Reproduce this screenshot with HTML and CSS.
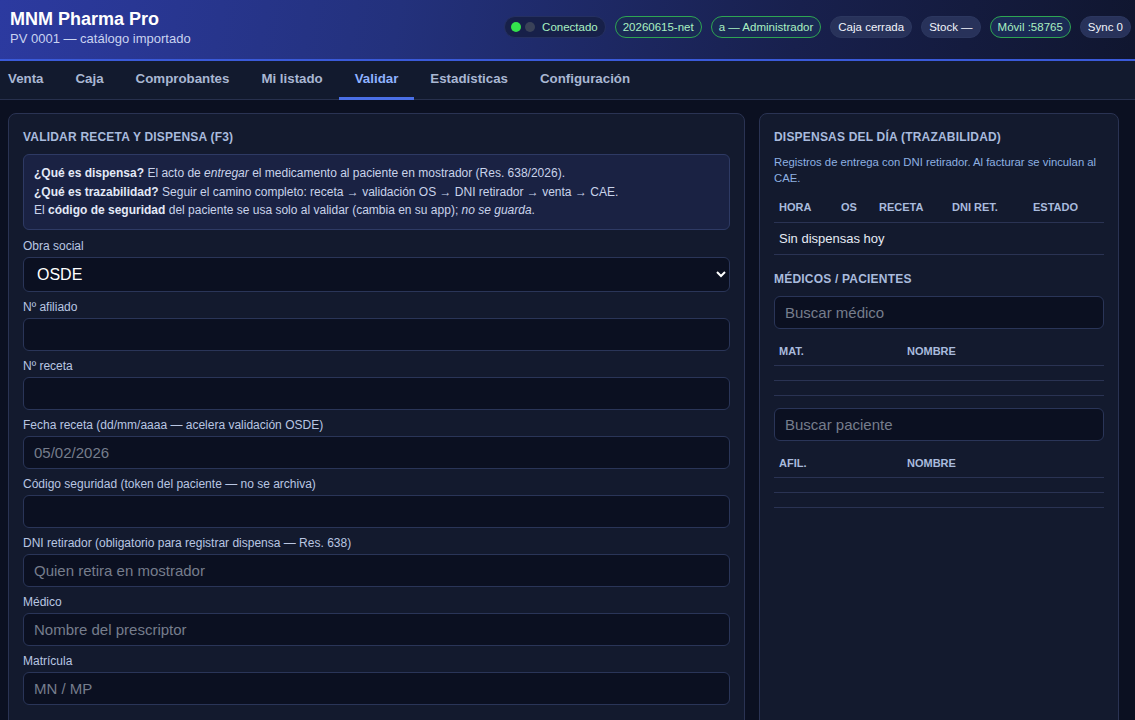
FILE: index.html
```html
<!DOCTYPE html>
<html lang="es">
<head>
    <meta charset="UTF-8">
    <meta name="viewport" content="width=device-width, initial-scale=1.0">
    <title>MNM Pharma Pro</title>
    <link rel="stylesheet" href="styles.css">
</head>
<body>
    <header class="topbar">
        <div class="brand">
            <h1>MNM Pharma Pro</h1>
            <div class="sub">PV 0001 — catálogo importado</div>
        </div>
        <div class="badges">
            <span class="badge status"><i class="dot on"></i><i class="dot off"></i>Conectado</span>
            <span class="badge ok">20260615-net</span>
            <span class="badge ok">a — Administrador</span>
            <span class="badge">Caja cerrada</span>
            <span class="badge">Stock —</span>
            <span class="badge ok">Móvil :58765</span>
            <span class="badge">Sync 0</span>
        </div>
    </header>

    <nav class="tabs">
        <a href="#">Venta</a>
        <a href="#">Caja</a>
        <a href="#">Comprobantes</a>
        <a href="#">Mi listado</a>
        <a href="#" class="active">Validar</a>
        <a href="#">Estadísticas</a>
        <a href="#">Configuración</a>
    </nav>

    <main class="layout">
        <section class="card">
            <h2>Validar receta y dispensa (F3)</h2>
            <div class="info">
                <b>¿Qué es dispensa?</b> El acto de <i>entregar</i> el medicamento al paciente en mostrador (Res. 638/2026).<br>
                <b>¿Qué es trazabilidad?</b> Seguir el camino completo: receta → validación OS → DNI retirador → venta → CAE.<br>
                El <b>código de seguridad</b> del paciente se usa solo al validar (cambia en su app); <i>no se guarda</i>.
            </div>

            <label for="os">Obra social</label>
            <select id="os">
                <option>OSDE</option>
                <option>PAMI</option>
                <option>Swiss Medical</option>
            </select>

            <label for="afil">Nº afiliado</label>
            <input id="afil" type="text">

            <label for="receta">Nº receta</label>
            <input id="receta" type="text">

            <label for="fecha">Fecha receta (dd/mm/aaaa — acelera validación OSDE)</label>
            <input id="fecha" type="text" placeholder="05/02/2026">

            <label for="token">Código seguridad (token del paciente — no se archiva)</label>
            <input id="token" type="text">

            <label for="dni">DNI retirador (obligatorio para registrar dispensa — Res. 638)</label>
            <input id="dni" type="text" placeholder="Quien retira en mostrador">

            <label for="medico">Médico</label>
            <input id="medico" type="text" placeholder="Nombre del prescriptor">

            <label for="mat">Matrícula</label>
            <input id="mat" type="text" placeholder="MN / MP">
        </section>

        <aside class="card side">
            <h2>Dispensas del día (trazabilidad)</h2>
            <p class="desc">Registros de entrega con DNI retirador. Al facturar se vinculan al CAE.</p>
            <table class="grid disp">
                <thead>
                    <tr><th>Hora</th><th>OS</th><th>Receta</th><th>DNI ret.</th><th>Estado</th></tr>
                </thead>
                <tbody>
                    <tr><td colspan="5" class="empty">Sin dispensas hoy</td></tr>
                </tbody>
            </table>

            <h2 class="sec">Médicos / Pacientes</h2>
            <input type="text" placeholder="Buscar médico">
            <table class="grid small">
                <thead>
                    <tr><th class="c1">Mat.</th><th>Nombre</th></tr>
                </thead>
                <tbody>
                    <tr><td></td><td></td></tr>
                    <tr><td></td><td></td></tr>
                </tbody>
            </table>

            <input type="text" placeholder="Buscar paciente" class="next">
            <table class="grid small">
                <thead>
                    <tr><th class="c1">Afil.</th><th>Nombre</th></tr>
                </thead>
                <tbody>
                    <tr><td></td><td></td></tr>
                    <tr><td></td><td></td></tr>
                </tbody>
            </table>
        </aside>
    </main>
</body>
</html>
```

FILE: styles.css
```css
* { box-sizing: border-box; }
html, body { margin: 0; height: 100%; overflow: hidden; }
body { font-family: "Liberation Sans", Arial, sans-serif; background: #0b1021; color: #e6ebf5; }

/* header */
.topbar { height: 61px; display: flex; align-items: flex-start; justify-content: space-between; padding: 8px 4px 0 10px;
    background: linear-gradient(100deg, #2c3aa0 0%, #23317c 35%, #18204d 70%, #10162f 100%);
    border-bottom: 2px solid #3a5ad9; }
.brand h1 { margin: 0; font-size: 18px; line-height: 22px; font-weight: bold; color: #fff; }
.brand .sub { font-size: 13px; line-height: 18px; color: #c9d3f0; }
.badges { display: flex; gap: 9px; align-items: center; padding-top: 8px; }
.badge { display: inline-flex; align-items: center; height: 22px; padding: 0 7px; border-radius: 12px; font-size: 11.5px;
    color: #f1f4fb; background: #28325a; border: 1px solid #2c375f; white-space: nowrap; }
.badge.ok { color: #a9f0c1; background: #1a2a55; border-color: #2ea553; }
.badge.status { color: #a9f0c1; background: #172049; border-color: #253061; padding-left: 6px; }
.dot { display: inline-block; width: 10px; height: 10px; border-radius: 50%; margin-right: 4px; }
.dot.on { background: #34e24d; }
.dot.off { background: #3a4258; margin-right: 7px; }

/* tabs */
.tabs { display: flex; height: 39px; background: #121a2e; border-bottom: 1px solid #27304d; margin-left: -8px; }
.tabs a { display: flex; align-items: center; padding: 0 16px 1px; font-size: 13.3px; font-weight: bold; color: #a9b7d3;
    text-decoration: none; border-bottom: 3px solid transparent; margin-bottom: -1px; }
.tabs a.active { color: #8fb2ff; border-bottom-color: #4a6fe6; }

/* layout */
.layout { display: grid; grid-template-columns: 737px 360px; gap: 14px; padding: 13px 0 0 8px; }
.card { background: #131a2e; border: 1px solid #2a3353; border-radius: 8px; padding: 15px 14px 20px; min-height: 640px; }
.card h2 { margin: 0 0 9px; font-size: 12px; line-height: 16px; font-weight: bold; text-transform: uppercase;
    letter-spacing: 0.2px; color: #a9bbdd; }

.info { background: #1a2243; border: 1px solid #2e3a64; border-radius: 6px; padding: 9px 10px; font-size: 12px;
    line-height: 18.5px; color: #c9d3ea; margin-bottom: 9px; }
.info b { color: #e3e9f7; }

label { display: block; font-size: 12px; line-height: 15px; color: #b9c6e2; margin-bottom: 3px; }
input, select { display: block; width: 100%; height: 33px; margin-bottom: 8px; padding: 0 10px; background: #0b1021;
    border: 1px solid #2a3558; border-radius: 6px; color: #e6ebf5; font-family: "Liberation Sans", Arial, sans-serif; font-size: 15px; }
select { height: 35px; color: #fff; font-size: 16px; padding-left: 9px; margin-bottom: 8px; }
input::placeholder { color: #767d8c; }

/* side */
.side .desc { margin: 0 0 10px; font-size: 11.3px; line-height: 16px; color: #8eb1e2; }
.grid { width: 100%; border-collapse: collapse; }
.grid th { text-align: left; font-size: 11px; line-height: 13px; font-weight: bold; text-transform: uppercase; color: #a9bbdd;
    padding: 5px 5px 7px; border-bottom: 1px solid #2a3353; }
.grid td { border-bottom: 1px solid #2a3353; padding: 0 5px; height: 15px; font-size: 13px; color: #e6ebf5; }
.grid td.empty { height: 32px; }
.disp th { padding-bottom: 8px; }
.disp th:nth-child(1) { width: 62px; }
.disp th:nth-child(2) { width: 38px; }
.disp th:nth-child(3) { width: 73px; }
.disp th:nth-child(4) { width: 81px; }
.side h2.sec { margin-top: 16px; margin-bottom: 9px; }
.side input { margin-bottom: 11px; }
.small th.c1 { width: 128px; }
.side input.next { margin-top: 12px; }
```
